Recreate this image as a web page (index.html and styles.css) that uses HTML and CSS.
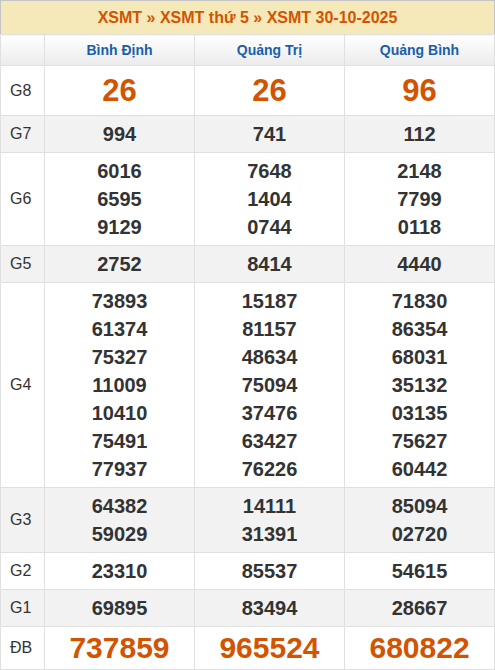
FILE: index.html
```html
<!DOCTYPE html>
<html lang="vi">
<head>
<meta charset="utf-8">
<title>XSMT 30-10-2025</title>
<link rel="stylesheet" href="styles.css">
</head>
<body>
<table class="kq">
  <colgroup>
    <col class="c-label">
    <col class="c-prov">
    <col class="c-prov">
    <col class="c-prov">
  </colgroup>
  <thead>
    <tr class="r-title">
      <th colspan="4"><a>XSMT</a> » <a>XSMT thứ 5</a> » <a>XSMT 30-10-2025</a></th>
    </tr>
    <tr class="r-prov">
      <th></th>
      <th>Bình Định</th>
      <th>Quảng Trị</th>
      <th>Quảng Bình</th>
    </tr>
  </thead>
  <tbody>
    <tr class="r-g8">
      <td class="lbl">G8</td>
      <td class="big">26</td>
      <td class="big">26</td>
      <td class="big">96</td>
    </tr>
    <tr class="alt">
      <td class="lbl">G7</td>
      <td>994</td>
      <td>741</td>
      <td>112</td>
    </tr>
    <tr>
      <td class="lbl">G6</td>
      <td>6016<br>6595<br>9129</td>
      <td>7648<br>1404<br>0744</td>
      <td>2148<br>7799<br>0118</td>
    </tr>
    <tr class="alt">
      <td class="lbl">G5</td>
      <td>2752</td>
      <td>8414</td>
      <td>4440</td>
    </tr>
    <tr>
      <td class="lbl">G4</td>
      <td>73893<br>61374<br>75327<br>11009<br>10410<br>75491<br>77937</td>
      <td>15187<br>81157<br>48634<br>75094<br>37476<br>63427<br>76226</td>
      <td>71830<br>86354<br>68031<br>35132<br>03135<br>75627<br>60442</td>
    </tr>
    <tr class="alt">
      <td class="lbl">G3</td>
      <td>64382<br>59029</td>
      <td>14111<br>31391</td>
      <td>85094<br>02720</td>
    </tr>
    <tr>
      <td class="lbl">G2</td>
      <td>23310</td>
      <td>85537</td>
      <td>54615</td>
    </tr>
    <tr class="alt">
      <td class="lbl">G1</td>
      <td>69895</td>
      <td>83494</td>
      <td>28667</td>
    </tr>
    <tr class="r-db">
      <td class="lbl">ĐB</td>
      <td class="big">737859</td>
      <td class="big">965524</td>
      <td class="big">680822</td>
    </tr>
  </tbody>
</table>
</body>
</html>
```
FILE: styles.css
```css
html, body {
  margin: 0;
  padding: 0;
  background: #ffffff;
}

body {
  font-family: "Liberation Sans", Arial, sans-serif;
  color: #333333;
}

.kq {
  width: 495px;
  border-collapse: collapse;
  table-layout: fixed;
  border: 1px solid #c4c4c4;
}

.c-label { width: 44px; }
.c-prov { width: 150px; }

.kq th,
.kq td {
  border: 1px solid #e0e0e0;
  padding: 4px 0;
  text-align: center;
  vertical-align: middle;
}

.r-title th {
  background: #f6e9b9;
  color: #d35400;
  font-size: 16px;
  font-weight: bold;
  line-height: 25px;
  border-top: 1px solid #c4c4c4;
  border-left: 1px solid #c4c4c4;
  border-right: 1px solid #c4c4c4;
}

.r-title a {
  color: #d35400;
  text-decoration: none;
}

.r-prov th {
  background: linear-gradient(#ffffff, #ebebeb);
  color: #1a5fa8;
  font-size: 14px;
  font-weight: bold;
  line-height: 22px;
}

.kq td {
  font-size: 20px;
  font-weight: bold;
  line-height: 28px;
  color: #333333;
}

.kq td.lbl {
  text-align: left;
  padding-left: 9px;
  font-size: 16px;
  font-weight: normal;
  color: #333333;
}

.alt td {
  background: #f2f2f2;
}

.kq td.big {
  color: #d35400;
  font-size: 31px;
}

.r-g8 td {
  line-height: 41px;
}

.r-db td {
  line-height: 34px;
  font-size: 30px;
}

.r-db td.big {
  font-size: 30px;
}
```
